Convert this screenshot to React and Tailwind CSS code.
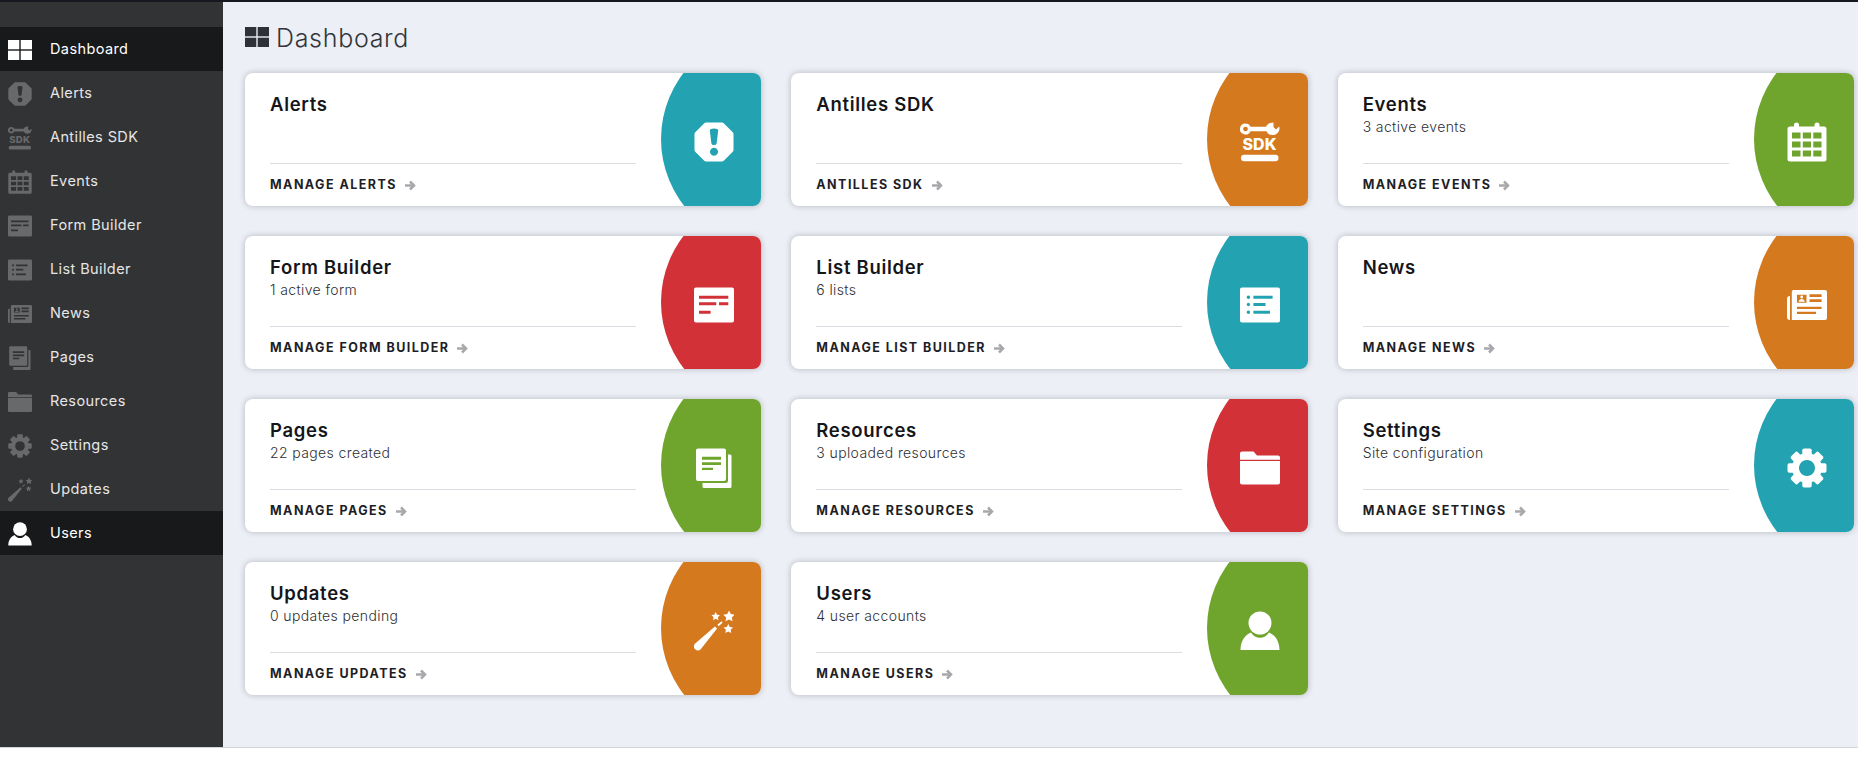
const starPoints = (cx, cy, r) => {
  const pts = [];
  for (let i = 0; i < 10; i++) {
    const rad = i % 2 === 0 ? r : r * 0.5;
    const a = -Math.PI / 2 + (i * Math.PI) / 5;
    pts.push(`${(cx + rad * Math.cos(a)).toFixed(2)},${(cy + rad * Math.sin(a)).toFixed(2)}`);
  }
  return pts.join(" ");
};

const rr = (x, y, w, h) => `M${x} ${y}h${w}v${h}h${-w}z`;

const Svg = ({ children, className }) => (
  <svg viewBox="0 0 40 40" fill="currentColor" className={className}>
    {children}
  </svg>
);

const ArrowIcon = () => (
  <svg viewBox="0 0 11 11" className="h-[11px] w-[11px] text-[#a8a8ac]" fill="none" stroke="currentColor" strokeWidth="2.5">
    <path d="M0 5.500H8.500" />
    <path d="M5 1.500L9 5.500 5 9.500" />
  </svg>
);

const icons = {
  alerts: (c) => (
    <Svg className={c}>
      <path
        fillRule="evenodd"
        d="M12 .5H28q1 0 2 1L38.500 10q1 1 1 2V28q0 1-1 2L30 38.500q-1 1-2 1H12q-1 0-2-1L1.500 30q-1-1-1-2V12q0-1 1-2L10 1.500q1-1 2-1ZM15.800 8.500Q15.800 6.500 20 6.500T24.200 8.500L22.600 21.500Q22.400 23 20 23T17.400 21.500ZM20 25.700a4 4 0 1 0 .01 0Z"
      />
    </Svg>
  ),
  sdk: (c) => (
    <Svg className={c}>
      <path
        fillRule="evenodd"
        d="M5.500 1.500a5.500 5.500 0 0 1 5 3.200H26C27.500 2 30 .5 33.500.5V5L36 7.500 39.200 4.500C40.500 9.500 36.500 13 32.500 13 29.500 13 27.500 11.500 26.500 9.200H10.500a5.500 5.500 0 1 1-5-7.700ZM5.500 4.700a2.300 2.300 0 1 0 .01 0Z"
      />
      <text x="19.500" y="27.800" textAnchor="middle" fontSize="16" fontWeight="800" fontFamily="Inter, sans-serif">SDK</text>
      <rect x="1" y="32.800" width="37.500" height="6.500" rx="3.200" />
    </Svg>
  ),
  events: (c) => (
    <Svg className={c}>
      <path
        fillRule="evenodd"
        d={`M7 4.500V3a2.500 2.500 0 0 1 5 0V4.500H27.500V3a2.500 2.500 0 0 1 5 0V4.500H37a2.500 2.500 0 0 1 2.500 2.500V37a2.500 2.500 0 0 1-2.500 2.500H3A2.500 2.500 0 0 1 .5 37V7A2.500 2.500 0 0 1 3 4.500Z
          ${rr(5, 10.5, 8.500, 6)} ${rr(15.800, 10.5, 8.200, 6)} ${rr(26.300, 10.5, 8.200, 6)}
          ${rr(5, 19.5, 8.500, 6)} ${rr(15.800, 19.5, 8.200, 6)} ${rr(26.300, 19.5, 8.200, 6)}
          ${rr(5, 28.5, 8.500, 6)} ${rr(15.800, 28.5, 8.200, 6)} ${rr(26.300, 28.5, 8.200, 6)}`}
      />
    </Svg>
  ),
  form: (c) => (
    <Svg className={c}>
      <path
        fillRule="evenodd"
        d={`M2 2.500H38a2 2 0 0 1 2 2V35.500a2 2 0 0 1-2 2H2a2 2 0 0 1-2-2V4.500a2 2 0 0 1 2-2Z
          ${rr(5, 10.7, 29.300, 3)} ${rr(5, 17.3, 17.300, 3)} ${rr(25, 17.3, 9.300, 3)} ${rr(5, 25.7, 11.600, 3)}`}
      />
    </Svg>
  ),
  list: (c) => (
    <Svg className={c}>
      <path
        fillRule="evenodd"
        d={`M2 2.500H38a2 2 0 0 1 2 2V35.500a2 2 0 0 1-2 2H2a2 2 0 0 1-2-2V4.500a2 2 0 0 1 2-2Z
          ${rr(13.4, 10.7, 19.200, 3)} ${rr(13.4, 18, 12.100, 3)} ${rr(13.4, 25.7, 16.600, 3)}
          M8.400 10.500a1.700 1.700 0 1 0 .01 0Z M8.400 17.800a1.700 1.700 0 1 0 .01 0Z M8.400 25.500a1.700 1.700 0 1 0 .01 0Z`}
      />
    </Svg>
  ),
  news: (c) => (
    <Svg className={c}>
      <path
        fillRule="evenodd"
        d={`M6.500 5H38a2 2 0 0 1 2 2V33a2 2 0 0 1-2 2H4.800V6.700A1.700 1.700 0 0 1 6.500 5Z
          ${rr(10, 9.7, 9.500, 8)} ${rr(22.5, 9.3, 12.100, 2.7)} ${rr(22.5, 14.3, 12.100, 2.700)} ${rr(10, 21.7, 24.600, 2.300)} ${rr(10, 26.700, 19, 2.300)}`}
      />
      <circle cx="14.700" cy="12" r="1.400" />
      <path d="M11.500 16.800c.5-2 1.800-2.800 3.200-2.800s2.700.8 3.200 2.800Z" />
      <path d="M3 11V35C1 35 0 34 0 32V13.500C0 12 1.200 11 3 11Z" />
    </Svg>
  ),
  pages: (c) => (
    <Svg className={c}>
      <path
        fillRule="evenodd"
        d={`M4 .5H30a2 2 0 0 1 2 2V31a2 2 0 0 1-2 2H4a2 2 0 0 1-2-2V2.500a2 2 0 0 1 2-2Z
          ${rr(8, 8.7, 19, 3)} ${rr(8, 14.3, 19, 2.700)} ${rr(8, 19.7, 11, 2.300)}`}
      />
      <path d="M34 6.500H36A1.500 1.500 0 0 1 37.500 8V38.500A1.500 1.500 0 0 1 36 40H10A1.500 1.500 0 0 1 8.500 38.500V35H31.500A2.500 2.500 0 0 0 34 32.500Z" />
    </Svg>
  ),
  resources: (c) => (
    <Svg className={c}>
      <path d="M2 3.500H13.500L17 7.500H38A2 2 0 0 1 40 9.500V11.700H0V5.500A2 2 0 0 1 2 3.500Z" />
      <path d="M0 13H40V34.500A2 2 0 0 1 38 36.500H2A2 2 0 0 1 0 34.500Z" />
    </Svg>
  ),
  settings: (c) => (
    <Svg className={c}>
      <path fillRule="evenodd" d="M20 5a15 15 0 1 0 .01 0ZM20 12a8 8 0 1 1-.01 0Z" />
      {[0, 45, 90, 135, 180, 225, 270, 315].map((a) => (
        <rect key={a} x="15.300" y="0.500" width="9.400" height="9" rx="1.800" transform={`rotate(${a} 20 20)`} />
      ))}
    </Svg>
  ),
  updates: (c) => (
    <Svg className={c}>
      <path d="M.9 32.750L20.900 15.500 23.100 17.500 6.700 38.250A4 4 0 0 1 .9 32.750Z" />
      <line x1="24" y1="14.500" x2="28" y2="11" stroke="currentColor" strokeWidth="1.800" />
      <polygon points={starPoints(21.7, 5.5, 4.5)} />
      <polygon points={starPoints(35, 5.5, 6)} />
      <polygon points={starPoints(34.3, 18, 5)} />
    </Svg>
  ),
  users: (c) => (
    <Svg className={c}>
      <ellipse cx="20" cy="12" rx="11.500" ry="11.500" />
      <path d="M.5 39C.5 30 5 24 11 21.500 13 25 16.500 26.700 20 26.700S27 25 29 21.500C35 24 39.500 30 39.500 39Z" />
    </Svg>
  ),
};

const DashIcon = ({ className }) => (
  <svg viewBox="0 0 24 20" fill="currentColor" className={className}>
    <rect x="0" y="0" width="11.300" height="9.300" />
    <rect x="12.700" y="0" width="11.300" height="9.300" />
    <rect x="0" y="10.700" width="11.300" height="9.300" />
    <rect x="12.700" y="10.700" width="11.300" height="9.300" />
  </svg>
);

const nav = [
  { label: "Dashboard", icon: "dash", active: true },
  { label: "Alerts", icon: "alerts" },
  { label: "Antilles SDK", icon: "sdk" },
  { label: "Events", icon: "events" },
  { label: "Form Builder", icon: "form" },
  { label: "List Builder", icon: "list" },
  { label: "News", icon: "news" },
  { label: "Pages", icon: "pages" },
  { label: "Resources", icon: "resources" },
  { label: "Settings", icon: "settings" },
  { label: "Updates", icon: "updates" },
  { label: "Users", icon: "users", active: true },
];

const TEAL = "bg-[#23a3b2]";
const ORANGE = "bg-[#d5791f]";
const GREEN = "bg-[#6fa42d]";
const RED = "bg-[#d13137]";

const cards = [
  { title: "Alerts", sub: "", link: "MANAGE ALERTS", icon: "alerts", color: TEAL },
  { title: "Antilles SDK", sub: "", link: "ANTILLES SDK", icon: "sdk", color: ORANGE },
  { title: "Events", sub: "3 active events", link: "MANAGE EVENTS", icon: "events", color: GREEN },
  { title: "Form Builder", sub: "1 active form", link: "MANAGE FORM BUILDER", icon: "form", color: RED },
  { title: "List Builder", sub: "6 lists", link: "MANAGE LIST BUILDER", icon: "list", color: TEAL },
  { title: "News", sub: "", link: "MANAGE NEWS", icon: "news", color: ORANGE },
  { title: "Pages", sub: "22 pages created", link: "MANAGE PAGES", icon: "pages", color: GREEN },
  { title: "Resources", sub: "3 uploaded resources", link: "MANAGE RESOURCES", icon: "resources", color: RED },
  { title: "Settings", sub: "Site configuration", link: "MANAGE SETTINGS", icon: "settings", color: TEAL },
  { title: "Updates", sub: "0 updates pending", link: "MANAGE UPDATES", icon: "updates", color: ORANGE },
  { title: "Users", sub: "4 user accounts", link: "MANAGE USERS", icon: "users", color: GREEN },
];

function Card({ title, sub, link, icon, color }) {
  return (
    <div className="relative h-[133px] overflow-hidden rounded-[8px] bg-white pl-[25px] shadow-[0_0_6px_rgba(0,0,0,0.24)]">
      <div className="h-[91px] w-[366px] border-b border-[#dcdde2] pt-[19px]">
        <div className="text-[18.5px] font-semibold leading-[24px] tracking-[0.7px] text-[#15161a]">{title}</div>
        <div className="mt-[1px] text-[14px] font-light leading-[20px] tracking-[0.38px] text-[#2f3034]">{sub}</div>
      </div>
      <div className="flex h-[42px] items-center gap-[8px] text-[12.5px] font-bold tracking-[1.45px] text-[#1d1e26]">
        <span>{link}</span>
        <ArrowIcon />
      </div>
      <div className={`absolute left-[416px] top-[-42px] h-[216px] w-[216px] rounded-full ${color}`} />
      {icons[icon]("absolute left-[449px] top-[49px] h-[40px] w-[40px] text-white")}
    </div>
  );
}

export default function App() {
  return (
    <div className="flex h-[758px] w-[1858px] flex-col overflow-hidden bg-white font-['Inter',sans-serif]">
      <div className="h-[2px] shrink-0 bg-[#17181f]" />
      <div className="flex flex-1">
        <aside className="w-[223px] shrink-0 bg-[#323335] pt-[25px]">
          {nav.map((n) => (
            <div
              key={n.label}
              className={`flex h-[44px] items-center gap-[18px] pl-[8px] text-[14.5px] tracking-[0.4px] ${
                n.active ? "bg-[#18191b] text-white" : "text-[#e6e6e6]"
              }`}
            >
              <span className={`flex h-[24px] w-[24px] translate-y-[1px] items-center justify-center ${n.active ? "text-white" : "text-[#68696b]"}`}>
                {n.icon === "dash" ? <DashIcon className="h-[20px] w-[24px]" /> : icons[n.icon]("h-[24px] w-[24px]")}
              </span>
              <span>{n.label}</span>
            </div>
          ))}
        </aside>
        <main className="flex-1 bg-[#eceff6] pl-[22px] pr-[4px] pt-[25px]">
          <div className="mb-[26px] flex h-[20px] items-center gap-[7px]">
            <DashIcon className="h-[20px] w-[24px] text-[#2f3136]" />
            <h1 className="pt-[2px] text-[25px] font-light leading-[20px] tracking-[0.7px] text-[#33353a]">Dashboard</h1>
          </div>
          <div className="grid grid-cols-3 gap-[30px]">
            {cards.map((c) => (
              <Card key={c.title} {...c} />
            ))}
          </div>
        </main>
      </div>
      <div className="h-[11px] shrink-0 border-t border-[#d3d5da] bg-white" />
    </div>
  );
}
